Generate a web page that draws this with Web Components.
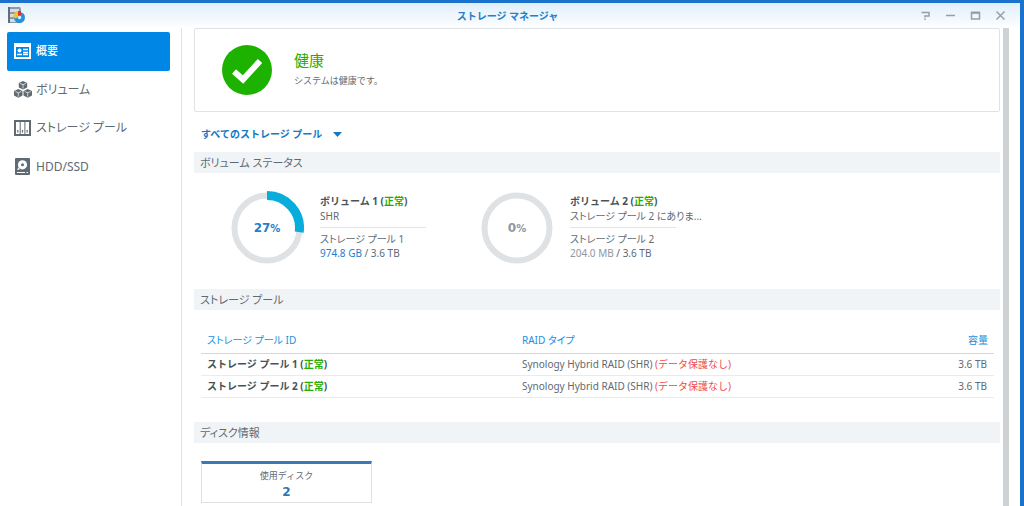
<!DOCTYPE html>
<html lang="ja">
<head>
<meta charset="utf-8">
<title>ストレージ マネージャ</title>
<style>
  html, body { height: 100%; }
  body {
    margin: 0;
    overflow: hidden;
    background: #1a72cc;
    color: #606a73;
    font: 10px/14px "Noto Sans", "Noto Sans CJK JP", sans-serif;
    font-kerning: normal;
  }
</style>
</head>
<body>
<storage-window>
  <nav-item slot="nav" current>
    <svg slot="icon" width="17" height="16" viewBox="0 0 17 16"><path fill="#fff" fill-rule="evenodd" d="M0 0h17v16H0zM2 4v10h13V4z"/><circle cx="5.500" cy="7.500" r="2" fill="#fff"/><path d="M9 6.500h5M9 9.500h5M3 11.500h5M9 11.500h5" stroke="#fff" stroke-width="1.300"/></svg>
    概要
  </nav-item>
  <nav-item slot="nav">
    <svg slot="icon" width="18" height="17" viewBox="0 0 18 17"><path fill="#5f6a73" d="M9 0l4.200 1.900v4.500L9 8.500 4.800 6.400V1.900zM4.300 8l4.200 1.900v4.700L4.300 16.700 0 14.600V9.900zM13.700 8L18 9.900v4.700l-4.300 2.100-4.200-2.100V9.900z"/><path d="M6 2.400L9 3.700l3-1.300M9 3.700v3.800M1.300 10.500l3 1.300 3-1.300M4.300 11.800v3.900M10.700 10.500l3 1.300 3-1.300M13.700 11.800v3.900" stroke="#fff" stroke-width=".7" fill="none"/></svg>
    ボリューム
  </nav-item>
  <nav-item slot="nav">
    <svg slot="icon" width="17" height="16" viewBox="0 0 17 16"><path fill="#5f6a73" fill-rule="evenodd" d="M0 0h17v16H0zM2 2v12h3.700V2zM6.700 2v12h3.700V2zM11.400 2v12H15V2z"/><path d="M3.800 10v2.500M8.500 10v2.500M13.200 10v2.500" stroke="#5f6a73" stroke-width="1.200"/></svg>
    ストレージ プール
  </nav-item>
  <nav-item slot="nav">
    <svg slot="icon" width="17" height="17" viewBox="0 0 17 17"><rect x="1" width="15" height="17" rx="1" fill="#5f6a73"/><circle cx="8.500" cy="6.800" r="4.600" fill="#fff"/><circle cx="8.500" cy="6.800" r="1.500" fill="#5f6a73"/><path d="M4.200 9.200L3.200 12l3-.8z" fill="#fff"/><path d="M3 14.500h8M12.500 14.500h1.500" stroke="#fff"/></svg>
    HDD/SSD
  </nav-item>

  <health-card heading="健康">システムは健康です。</health-card>
  <pool-filter></pool-filter>
  <info-section heading="ボリューム ステータス">
    <volume-status percent="27" name="ボリューム 1" kind="SHR" pool="ストレージ プール 1" used="974.8 GB" total="3.6 TB"></volume-status>
    <volume-status percent="0" name="ボリューム 2" kind="ストレージ プール 2 にありま..." pool="ストレージ プール 2" used="204.0 MB" total="3.6 TB"></volume-status>
  </info-section>
  <info-section heading="ストレージ プール">
    <pool-table></pool-table>
  </info-section>
  <info-section heading="ディスク情報">
    <disk-count label="使用ディスク">2</disk-count>
  </info-section>
</storage-window>

<script>
class Base extends HTMLElement {
  connectedCallback() {
    if (this.shadowRoot) return;
    this.attachShadow({ mode: 'open' }).innerHTML = this.view();
  }
  a(name) { return this.getAttribute(name) || ''; }
}

customElements.define('storage-window', class extends Base {
  view() { return `
  <style>
    :host { display: flex; flex-direction: column; box-sizing: border-box; height: 100vh; border: solid #1a72cc; border-width: 3px 4px 0 0;
            background: linear-gradient(#e0effa, #fff 26px); }
    header { display: grid; grid-template-columns: 1fr auto 1fr; align-items: center; flex: 0 0 25px; padding: 0 12px 0 7px; }
    h1 { margin: 0; font-size: 10px; line-height: 14px; font-weight: 700; color: #2480cc; }
    .tools { display: flex; justify-content: flex-end; gap: 10px; }
    button { width: 15px; height: 15px; padding: 0; border: 0; background: none; display: grid; place-items: center; }
    button svg { display: block; fill: none; stroke: #93a0ab; stroke-width: 1.500; }
    .body { display: flex; flex: 1; min-height: 0; background: #fff; }
    aside { flex: 0 0 174px; padding: 4px 0 0 7px; border-right: 1px solid #dfe3e6; }
    nav { display: grid; grid-template-rows: repeat(4, 1fr); height: 154px; margin-right: 11px; }
    main { flex: 1; min-width: 0; padding: 0 3px 0 12px; overflow: hidden; }
    .bar { flex: 0 0 6px; margin-right: 11px; background: #cfd2d5; }
  </style>
  <header>
    <svg width="19" height="18" viewBox="0 0 19 18"><path fill="#8f9ba4" d="M1 0h12l1 2v14H1z"/><path fill="#d3dce2" d="M3 2h9v3H3zM3 7h9v3H3zM3 12h6v3H3z"/><path fill="#5f6e79" d="M1 0h2v16H1z"/><circle cx="12.500" cy="10.500" r="5.500" fill="#2492dd"/><circle cx="12.500" cy="10.500" r="1.800" fill="#d5efff"/><path fill="#f4c331" d="M11 4v5.500L9 11.500 6 10l2-5z"/><path fill="#d93631" d="M11 4h3v4h-3z"/></svg>
    <h1>ストレージ マネージャ</h1>
    <div class="tools">
      <button aria-label="ヘルプ"><svg width="11" height="11"><path d="M1.500 2.500H9V6H5V7.500M5 8.500V10"/></svg></button>
      <button aria-label="最小化"><svg width="11" height="11"><path d="M1 5.500h9"/></svg></button>
      <button aria-label="最大化"><svg width="11" height="11"><path d="M1.500 2v7h8V2M1 3h9"/><path d="M1 2.500h9" stroke-width="2"/></svg></button>
      <button aria-label="閉じる"><svg width="11" height="11"><path d="M1.500 1.500l8 8M9.500 1.500l-8 8"/></svg></button>
    </div>
  </header>
  <div class="body">
    <aside><nav><slot name="nav"></slot></nav></aside>
    <main><slot></slot></main>
    <div class="bar"></div>
  </div>`; }
});

customElements.define('nav-item', class extends Base {
  view() { return `
  <style>
    :host { display: block; }
    a { display: flex; align-items: center; gap: 4px; height: 100%; box-sizing: border-box; padding-left: 7px; border-radius: 2px;
        color: #606a73; font-size: 12px; line-height: 16px; text-decoration: none; font-feature-settings: "palt"; }
    .icon { flex: 0 0 18px; display: flex; }
    :host([current]) a { background: #0086e5; color: #fff; font-size: 11px; font-weight: 500; }
  </style>
  <a href="#"><span class="icon"><slot name="icon"></slot></span><span><slot></slot></span></a>`; }
});

customElements.define('health-card', class extends Base {
  view() { return `
  <style>
    :host { display: flex; align-items: center; gap: 22px; box-sizing: border-box; height: 84px; padding-left: 27px; border: 1px solid #dfe3e6; border-radius: 2px; }
    h2 { margin: 0; font-size: 15px; line-height: 22px; font-weight: 400; color: #1fae0a; }
    p { margin: 0; font-size: 9px; line-height: 20px; }
  </style>
  <svg width="50" height="50" viewBox="0 0 50 50"><circle cx="25" cy="25" r="25" fill="#1db100"/><path d="M12 26.500l9 8L38 16" fill="none" stroke="#fff" stroke-width="6"/></svg>
  <div><h2>${this.a('heading')}</h2><p><slot></slot></p></div>`; }
});

customElements.define('pool-filter', class extends Base {
  view() { return `
  <style>
    :host { display: flex; align-items: center; height: 40px; padding: 4px 0 0 7px; box-sizing: border-box; }
    label { display: flex; align-items: center; gap: 10px; }
    select { appearance: none; margin: 0; padding: 0; border: 0; background: none; color: #1478c4; font: inherit; font-weight: 700; }
  </style>
  <label><select aria-label="ストレージ プール"><option>すべてのストレージ プール</option></select>
  <svg width="9" height="5"><path fill="#1478c4" d="M0 0h9L4.500 5z"/></svg></label>`; }
});

customElements.define('info-section', class extends Base {
  view() { return `
  <style>
    :host { display: block; }
    h2 { margin: 0; padding-left: 6px; font-size: 11px; line-height: 21px; font-weight: 400; background: #f0f4f7; font-feature-settings: "palt"; }
    div { display: flex; padding: 18px 6px 24px 7px; }
  </style>
  <h2>${this.a('heading')}</h2><div><slot></slot></div>`; }
});

customElements.define('volume-status', class extends Base {
  view() {
    const p = +this.a('percent');
    const t = p / 100 * 2 * Math.PI;
    const x = 37 + 32.5 * Math.sin(t), y = 37 - 32.5 * Math.cos(t);
    const arc = p ? `<path d="M37 4.500A32.500 32.500 0 0 1 ${x} ${y}" fill="none" stroke="#08addb" stroke-width="9"/>` : '';
    return `
  <style>
    :host { display: flex; flex: 0 0 221px; gap: 16px; padding-left: 29px; height: 74px; }
    .ring { display: grid; width: 74px; height: 74px; }
    .ring > * { grid-area: 1 / 1; }
    b { place-self: center; font: 700 12px/16px "DejaVu Sans", sans-serif; color: ${p ? '#2480cc' : '#8d98a1'}; }
    small { font-size: 10px; }
    .info { display: grid; grid-template-rows: 15px 14px 9px 14px 14px; padding-top: 3px; line-height: 14px; white-space: nowrap; width: 106px; font-feature-settings: "palt"; }
    h3 { margin: 0; font-size: 10px; font-feature-settings: normal; line-height: 14px; color: #48525b; }
    em { font-style: normal; color: #1fae0a; }
    hr { width: 106px; height: 1px; margin: 4px 0; border: 0; background: #e1e5e8; }
    .used { color: ${p ? '#2480cc' : '#8d98a1'}; }
  </style>
  <div class="ring"><svg width="74" height="74"><circle cx="37" cy="37" r="32.500" fill="none" stroke="#dfe2e5" stroke-width="6"/>${arc}</svg><b>${p}<small>%</small></b></div>
  <div class="info"><h3>${this.a('name')} (<em>正常</em>)</h3><span>${this.a('kind')}</span><hr><span>${this.a('pool')}</span><span><span class="used">${this.a('used')}</span> / ${this.a('total')}</span></div>`;
  }
});

customElements.define('pool-table', class extends Base {
  view() {
    const row = n => `<tr><th scope="row">ストレージ プール ${n} (<em>正常</em>)</th><td>Synology Hybrid RAID (SHR) <i>(データ保護なし)</i></td><td>3.6 TB</td></tr>`;
    return `
  <style>
    :host { display: block; flex: 1; }
    table { width: 100%; border-collapse: collapse; table-layout: fixed; }
    th, td { box-sizing: border-box; height: 22px; padding: 0 6px; text-align: left; border-bottom: 1px solid #e9ecee; font-weight: 400; }
    thead th { height: 25px; color: #2490dc; border-color: #d3d8dc; font-feature-settings: "palt"; }
    tbody th { font-weight: 700; color: #48525b; }
    th:first-child { width: 315px; }
    th:last-child, td:last-child { width: 14%; text-align: right; }
    td:last-child { padding-right: 7px; }
    em, i { font-style: normal; }
    em { color: #1fae0a; }
    i { color: #f04a4a; }
  </style>
  <table><thead><tr><th>ストレージ プール ID</th><th>RAID タイプ</th><th>容量</th></tr></thead><tbody>${row(1)}${row(2)}</tbody></table>`;
  }
});

customElements.define('disk-count', class extends Base {
  view() { return `
  <style>
    :host { display: block; box-sizing: border-box; width: 171px; height: 42px; padding-top: 4px; text-align: center;
            border: 1px solid #dde1e5; border-top: 3px solid #3b79b6; }
    span, b { display: block; }
    span { font-size: 9px; line-height: 16px; }
    b { font: 700 12px/16px "DejaVu Sans", sans-serif; color: #2c77bb; }
  </style>
  <span>${this.a('label')}</span><b><slot></slot></b>`; }
});
</script>
</body>
</html>
